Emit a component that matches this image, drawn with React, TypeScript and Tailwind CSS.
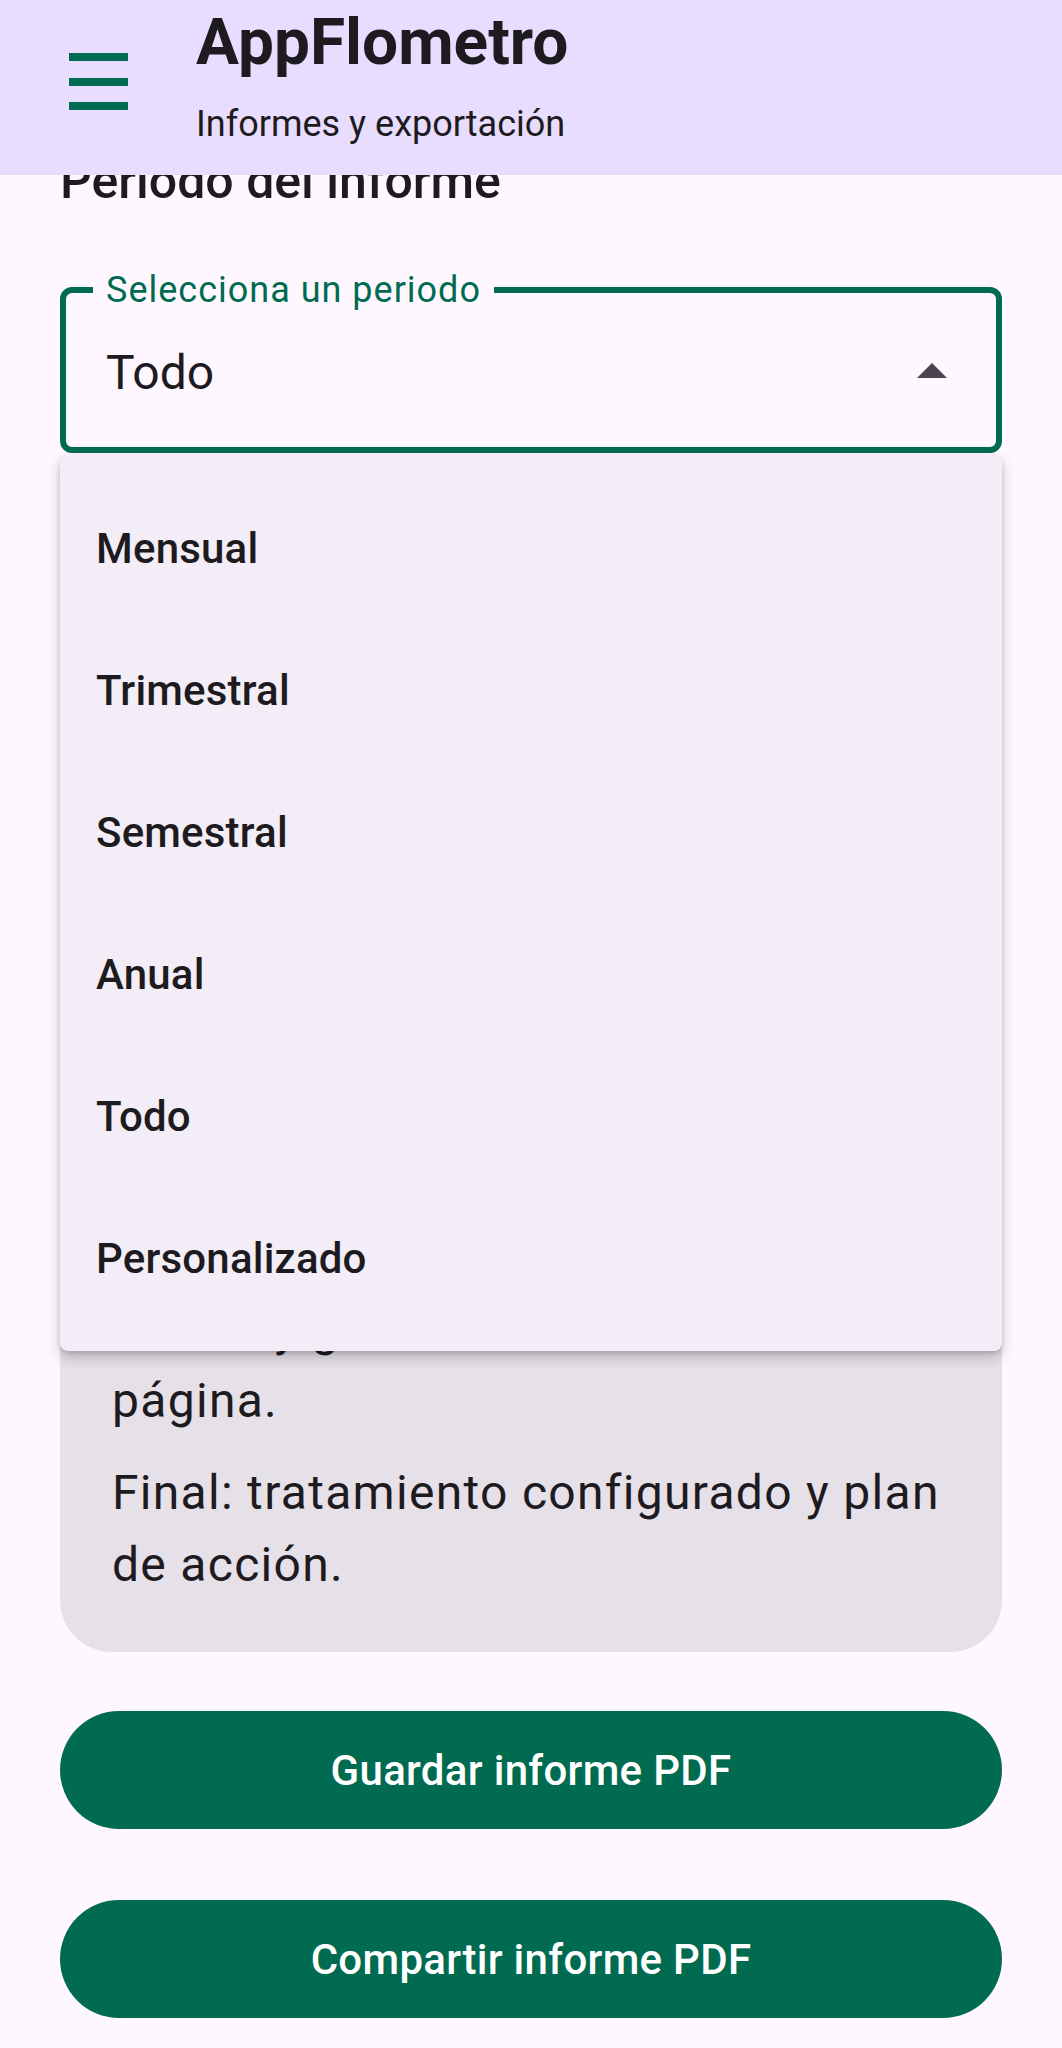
import React from "react";

const periods = ["Mensual", "Trimestral", "Semestral", "Anual", "Todo", "Personalizado"];

function MenuIcon() {
  return (
    <svg width="59" height="58" viewBox="0 0 59 58" fill="#006b50">
      <rect x="0" y="0" width="59" height="8" />
      <rect x="0" y="25" width="59" height="8" />
      <rect x="0" y="49" width="59" height="8" />
    </svg>
  );
}

export default function App() {
  return (
    <div
      className="w-[1062px] h-[2048px] overflow-hidden bg-[#fef7ff] text-[#1d1b20]"
      style={{ fontFamily: "Roboto, 'Noto Sans', sans-serif" }}
    >
      {/* Top app bar */}
      <header className="relative z-10 h-[175px] bg-[#e9ddff] flex items-start">
        <button className="ml-[69px] mt-[53px]">
          <MenuIcon />
        </button>
        <div className="ml-[68px] pt-[10px] flex flex-col">
          <h1 className="text-[64px] leading-[66px] font-bold">AppFlometro</h1>
          <p className="mt-[30px] text-[36px] leading-[36px]">Informes y exportación</p>
        </div>
      </header>

      <main className="-mt-[24px] px-[60px] flex flex-col">
        <h2 className="text-[50px] leading-[60px] font-medium">Periodo del informe</h2>

        {/* Select field (expanded) */}
        <div className="relative z-20 mt-[76px]">
          <div className="h-[166px] rounded-[12px] border-[6px] border-[#006b50] flex items-center justify-between pl-[40px] pr-[49px]">
            <span className="pt-[5px] text-[48px] leading-[56px]">Todo</span>
            <svg width="30" height="15" viewBox="0 0 30 15">
              <path d="M15 0 L30 15 L0 15 Z" fill="#49454f" />
            </svg>
          </div>
          <span className="absolute left-[33px] top-[3px] -translate-y-1/2 px-[13px] bg-[#fef7ff] text-[36px] leading-[40px] tracking-[1px] text-[#006b50]">
            Selecciona un periodo
          </span>

          {/* Dropdown menu, lies over the rest of the page */}
          <ul className="absolute left-0 right-0 top-full mt-[2px] py-[22px] rounded-[8px] bg-[#f3edf7] shadow-[0_6px_14px_rgba(0,0,0,0.22),0_2px_4px_rgba(0,0,0,0.12)]">
            {periods.map((p) => (
              <li key={p} className="h-[142px] flex items-center px-[36px] text-[42px] font-medium tracking-[0.2px]">
                {p}
              </li>
            ))}
          </ul>
        </div>

        {/* Preview card (mostly covered by the open menu) */}
        <div className="mt-[792px] rounded-[52px] bg-[#e6e0e9] px-[52px] pt-[48px] pb-[51px] flex flex-col gap-[20px] text-[48px] leading-[72px] tracking-[1.3px]">
          <p>
            Tablas y gráficos de cada
            <br />
            página.
          </p>
          <p>Final: tratamiento configurado y plan de acción.</p>
        </div>

        <button className="mt-[59px] h-[118px] rounded-full bg-[#006b50] text-white text-[42px] font-medium tracking-[0.3px]">
          Guardar informe PDF
        </button>
        <button className="mt-[71px] h-[118px] rounded-full bg-[#006b50] text-white text-[42px] font-medium tracking-[0.3px]">
          Compartir informe PDF
        </button>
      </main>
    </div>
  );
}
